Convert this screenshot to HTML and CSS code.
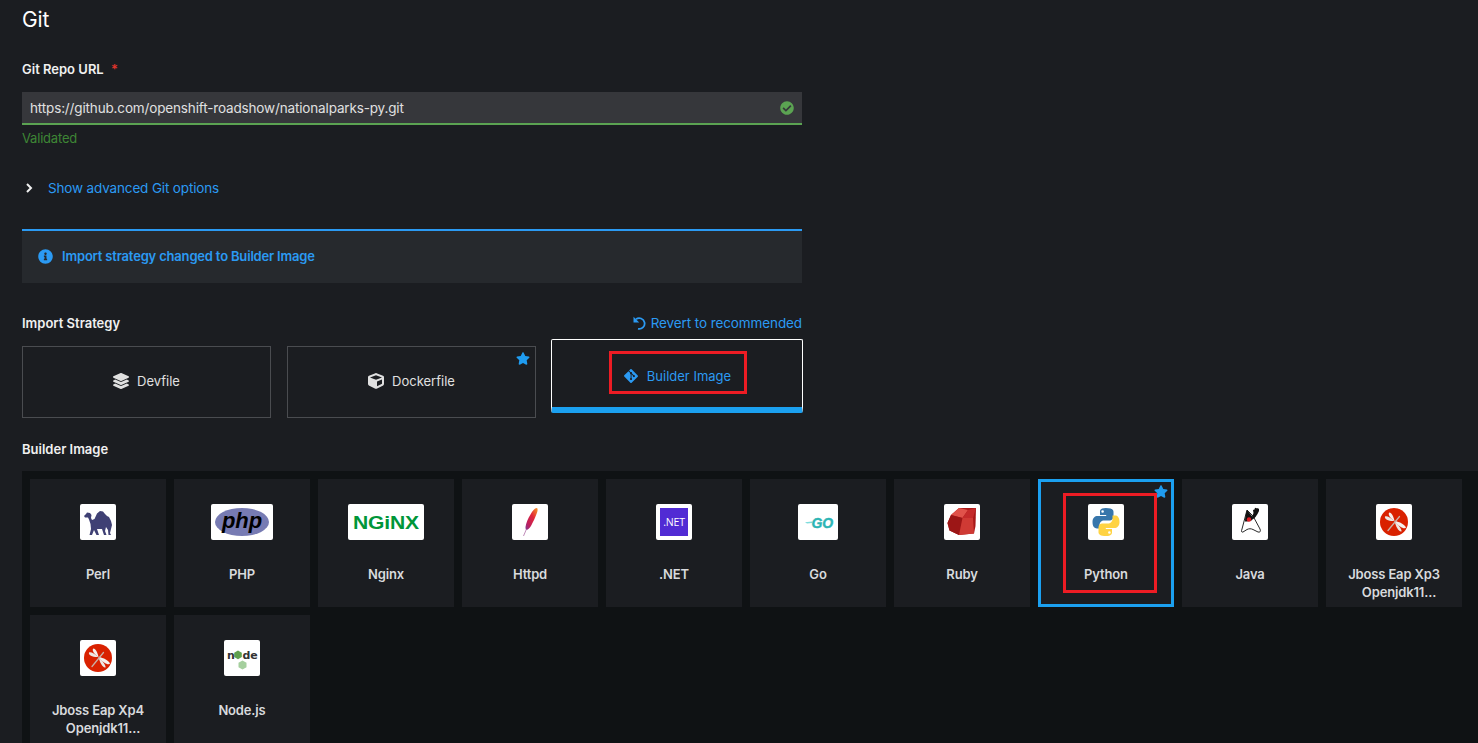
FILE: index.html
```html
<!DOCTYPE html>
<html lang="en">
<head>
    <meta charset="UTF-8">
    <meta name="viewport" content="width=device-width, initial-scale=1.0">
    <title>Import from Git</title>
    <link rel="stylesheet" href="styles.css">
</head>
<body>
    <svg class="defs" width="0" height="0">
        <symbol id="star" viewBox="0 0 576 512"><path d="M259.3 17.8L194 150.2 47.9 171.5c-26.2 3.8-36.7 36.1-17.7 54.6l105.7 103-25 145.5c-4.5 26.3 23.2 46 46.4 33.7L288 439.6l130.7 68.7c23.2 12.2 50.9-7.4 46.4-33.7l-25-145.5 105.7-103c19-18.5 8.5-50.8-17.7-54.6L382 150.2 316.7 17.8c-11.7-23.6-45.6-23.9-57.4 0z"/></symbol>
        <symbol id="dragonfly" viewBox="0 0 36 36">
            <circle cx="18" cy="18" r="14" fill="#d92100"/>
            <path d="M18.500 17C17.500 12.500 15.500 8.500 13.500 8.500 11.500 9.500 13.500 14 18.500 17z" fill="#f5f1ee"/>
            <path d="M18.500 17C14 13 10.500 11.500 9 12.500 8 15 13 17.500 18.500 17z" fill="#ece7e3"/>
            <path d="M18.500 17C23.500 17.500 29 21 30 23.500 29 26 22.500 22.500 18.500 17z" fill="#f5f1ee"/>
            <path d="M18.500 17C22 20 26 25.500 25.500 27.500 23 28.500 19.500 22 18.500 17z" fill="#ece7e3"/>
            <path d="M23.500 12.500L12 26.500" stroke="#c9b0a6" stroke-width="1.300" stroke-linecap="round"/>
        </symbol>
    </svg>

    <div class="page">
        <h1 class="title">Git</h1>

        <div class="form-col">
            <label class="field-label">Git Repo URL <span class="req">*</span></label>
            <div class="url-input">
                <span>https://github.com/openshift-roadshow/nationalparks-py.git</span>
                <svg class="ok-icon" viewBox="0 0 512 512"><path d="M504 256c0 136.967-111.033 248-248 248S8 392.967 8 256 119.033 8 256 8s248 111.033 248 248zM227.314 387.314l184-184c6.248-6.248 6.248-16.379 0-22.627l-22.627-22.627c-6.248-6.249-16.379-6.25-22.628 0L216 308.118l-70.059-70.059c-6.248-6.248-16.379-6.248-22.628 0l-22.627 22.627c-6.248 6.248-6.248 16.379 0 22.627l104 104c6.249 6.249 16.379 6.249 22.628.001z"/></svg>
            </div>
            <div class="helper">Validated</div>

            <div class="advanced">
                <svg class="chevron" viewBox="0 0 10 12"><path d="M3 2l4 4-4 4" fill="none" stroke="#f0f0f0" stroke-width="2"/></svg>
                <a class="link">Show advanced Git options</a>
            </div>

            <div class="alert">
                <svg class="info-icon" viewBox="0 0 512 512"><path d="M256 8C119.043 8 8 119.083 8 256c0 136.997 111.043 248 248 248s248-111.003 248-248C504 119.083 392.957 8 256 8zm0 110c23.196 0 42 18.804 42 42s-18.804 42-42 42-42-18.804-42-42 18.804-42 42-42zm56 254c0 6.627-5.373 12-12 12h-88c-6.627 0-12-5.373-12-12v-24c0-6.627 5.373-12 12-12h12v-64h-12c-6.627 0-12-5.373-12-12v-24c0-6.627 5.373-12 12-12h64c6.627 0 12 5.373 12 12v100h12c6.627 0 12 5.373 12 12v24z"/></svg>
                <span>Import strategy changed to Builder Image</span>
            </div>

            <div class="strategy-head">
                <span class="field-label">Import Strategy</span>
                <a class="link revert">
                    <svg class="revert-icon" viewBox="0 0 14 14"><path d="M3 3.200A5.400 5.400 0 1 1 5 12.800" fill="none" stroke="currentColor" stroke-width="1.800"/><path d="M.5 .8v5.700h5.700z" fill="currentColor"/></svg>
                    Revert to recommended
                </a>
            </div>

            <div class="strategies">
                <div class="strategy">
                    <svg class="strategy-icon" viewBox="0 0 512 512"><path d="M12.41 148.02l232.94 105.67c6.8 3.09 14.49 3.09 21.29 0l232.94-105.67c16.55-7.51 16.55-32.52 0-40.03L266.65 2.31a25.607 25.607 0 0 0-21.29 0L12.41 107.98c-16.55 7.51-16.55 32.53 0 40.04zm487.18 88.28l-58.09-26.33-161.64 73.27c-7.56 3.43-15.59 5.17-23.86 5.17s-16.29-1.74-23.86-5.17L70.51 209.97l-58.1 26.33c-16.55 7.5-16.55 32.5 0 40l232.94 105.59c6.8 3.08 14.49 3.08 21.29 0L499.59 276.3c16.55-7.5 16.55-32.5 0-40zm0 127.8l-57.87-26.23-161.86 73.37c-7.56 3.43-15.59 5.17-23.86 5.17s-16.29-1.74-23.86-5.17L70.29 337.87l-57.88 26.23c-16.55 7.5-16.55 32.5 0 40l232.94 105.59c6.8 3.08 14.49 3.08 21.29 0L499.59 404.1c16.55-7.5 16.55-32.5 0-40z"/></svg>
                    Devfile
                </div>
                <div class="strategy">
                    <svg class="star-corner"><use href="#star"/></svg>
                    <svg class="strategy-icon" viewBox="0 0 512 512"><path d="M239.1 6.3l-208 78c-18.7 7-31.1 25-31.1 45v225.1c0 18.2 10.3 34.8 26.5 42.9l208 104c13.5 6.8 29.4 6.8 42.9 0l208-104c16.3-8.1 26.5-24.8 26.5-42.9V129.3c0-20-12.4-37.9-31.1-44.9l-208-78C262 2.2 250 2.2 239.1 6.3zM256 68.4l192 72v1.1l-192 78-192-78v-1.1l192-72zm32 356V275.5l160-65v133.9l-160 80z"/></svg>
                    Dockerfile
                </div>
                <div class="strategy selected">
                    <svg class="strategy-icon" viewBox="0 0 448 512"><path d="M439.55 236.05L244 40.45a28.87 28.87 0 0 0-40.81 0l-40.66 40.63 51.52 51.52c27.06-9.14 52.68 16.77 43.39 43.68l49.66 49.66c34.23-11.8 61.18 31 35.47 56.69-26.49 26.49-70.21-2.87-56-37.34L240.22 199v121.85c25.3 12.54 22.26 41.85 9.08 55a34.34 34.34 0 0 1-48.55 0c-17.57-17.6-11.07-46.91 11.25-56v-123c-20.8-8.51-24.6-30.74-18.64-45L142.57 101 8.45 235.14a28.86 28.86 0 0 0 0 40.81l195.61 195.6a28.86 28.86 0 0 0 40.8 0l194.69-194.69a28.86 28.86 0 0 0 0-40.81z"/></svg>
                    Builder Image
                    <div class="red-box builder-mark"></div>
                </div>
            </div>

            <div class="field-label builder-label">Builder Image</div>
        </div>

        <div class="catalog">
            <div class="card">
                <div class="logo">
                    <svg viewBox="0 0 36 36"><path d="M4 12L6 10 7 8.500 10 9 11.500 11 11 14 12 16 14.500 15 17 9.500 20 7 23 7.500 25 10 27 12 29 13 31 17 32 21 31 25 30 29 31 31 28.500 31 28 26 26 23 25 27 26.500 31 24 31 22 25 17 25 19 31 16.500 31 14 26 12 31 9.500 31 11 25 10.500 20 9 15.500 8 13.500 5 13.500z" fill="#3f4074"/></svg>
                </div>
                <div class="card-name">Perl</div>
            </div>
            <div class="card">
                <div class="logo logo-php">
                    <svg viewBox="0 0 62 36"><ellipse cx="31" cy="18" rx="27" ry="14" fill="#777bb3"/><text x="31" y="24" class="php-text">php</text></svg>
                </div>
                <div class="card-name">PHP</div>
            </div>
            <div class="card">
                <div class="logo logo-nginx">
                    <svg viewBox="0 0 76 36"><text x="5" y="25" class="nginx-text" textLength="66" lengthAdjust="spacingAndGlyphs">NGiNX</text></svg>
                </div>
                <div class="card-name">Nginx</div>
            </div>
            <div class="card">
                <div class="logo">
                    <svg viewBox="0 0 36 36">
                        <defs><linearGradient id="feather" x1="1" y1="0" x2="0" y2="1"><stop offset="0" stop-color="#f69923"/><stop offset=".4" stop-color="#e0263a"/><stop offset=".75" stop-color="#be1f5d"/><stop offset="1" stop-color="#7c3a94"/></linearGradient></defs>
                        <path d="M25 4c1 1 .8 3-.5 6-1.500 4-3.500 8-5 11-1.500 3-3.500 4.500-5 5-.8-.5-1-1.500-1-3 .5-4 2.500-8.500 5-12.500 2-3.500 4-6.500 6.500-6.500z" fill="url(#feather)"/>
                        <path d="M14.500 25L11.500 32" stroke="#b06fa8" stroke-width=".8"/>
                    </svg>
                </div>
                <div class="card-name">Httpd</div>
            </div>
            <div class="card">
                <div class="logo">
                    <svg viewBox="0 0 36 36"><rect x="4" y="4" width="28" height="28" fill="#512bd4"/><text x="18" y="22" class="net-text">.NET</text></svg>
                </div>
                <div class="card-name">.NET</div>
            </div>
            <div class="card">
                <div class="logo logo-go">
                    <svg viewBox="0 0 40 36"><path d="M7 18.200L14 17.500V19L9 19.500z" fill="#7fdcdc"/><text x="13.500" y="24.300" class="go-text">GO</text></svg>
                </div>
                <div class="card-name">Go</div>
            </div>
            <div class="card">
                <div class="logo">
                    <svg viewBox="0 0 36 36"><path d="M15 4L32 4 31.500 22 30 29.500 15 31 5.500 26.500 3.500 19 7 11z" fill="#a81818"/><path d="M15 4L24 6 18.500 14 7 11z" fill="#e0524a"/><path d="M24 6L32 4 29 14 18.500 14z" fill="#c42a2a"/><path d="M7 11L18.500 14 15 31 5.500 26.500 3.500 19z" fill="#9c1616"/><path d="M18.500 14L29 14 30 29.500 15 31z" fill="#cf3a34"/></svg>
                </div>
                <div class="card-name">Ruby</div>
            </div>
            <div class="card selected">
                <svg class="star-corner"><use href="#star"/></svg>
                <div class="logo">
                    <svg viewBox="0 0 36 36">
                        <path fill-rule="evenodd" d="M17.800 4C12.800 4 12 6 12 7.800V11h6.200v1H9.500C7 12 4.500 13.700 4.500 18c0 4.500 2 6.400 4.400 6.400h2.600v-3.300c0-2.500 2.100-4.600 4.600-4.600h5.700c2 0 3.700-1.700 3.700-3.700V7.800C25.500 5.700 23.800 4 17.800 4zM14.600 6.200a1.300 1.300 0 1 1 0 2.600 1.300 1.300 0 0 1 0-2.600z" fill="#3776ab"/>
                        <path fill-rule="evenodd" transform="rotate(180 18 18)" d="M17.800 4C12.800 4 12 6 12 7.800V11h6.200v1H9.500C7 12 4.500 13.700 4.500 18c0 4.500 2 6.400 4.400 6.400h2.600v-3.300c0-2.500 2.100-4.600 4.600-4.600h5.700c2 0 3.700-1.700 3.700-3.700V7.800C25.500 5.700 23.800 4 17.800 4zM14.600 6.200a1.300 1.300 0 1 1 0 2.600 1.300 1.300 0 0 1 0-2.600z" fill="#ffd343"/>
                    </svg>
                </div>
                <div class="card-name">Python</div>
                <div class="red-box python-mark"></div>
            </div>
            <div class="card">
                <div class="logo">
                    <svg viewBox="0 0 36 36">
                        <path d="M15 6L10 25c-1 2.500-.5 3.500 1 3l4-2.500c2-1 4-1 6 0l5 2.500c2 .5 3-.5 2-3l-7-13z" fill="#fff" stroke="#111" stroke-width=".9"/>
                        <path d="M15 6l6.500 8c-1 2.500-3 3.500-8.500 3.500C13 13 14 9 15 6z" fill="#111"/>
                        <circle cx="17" cy="15.500" r="2.200" fill="#e01b24"/>
                        <path d="M20 13l1.500-4-.5-3 1.500-.5 .5-1.800 1.500 .5 1.500 0 1 .8 0 2-1.500 3-2 3-2 2z" fill="#111"/>
                    </svg>
                </div>
                <div class="card-name">Java</div>
            </div>
            <div class="card">
                <div class="logo"><svg viewBox="0 0 36 36"><use href="#dragonfly"/></svg></div>
                <div class="card-name">Jboss Eap Xp3 <span class="name-more">Openjdk11...</span></div>
            </div>
            <div class="card">
                <div class="logo"><svg viewBox="0 0 36 36"><use href="#dragonfly"/></svg></div>
                <div class="card-name">Jboss Eap Xp4 <span class="name-more">Openjdk11...</span></div>
            </div>
            <div class="card">
                <div class="logo">
                    <svg viewBox="0 0 36 36">
                        <path d="M14 10.500l3.800 2.200v4.400L14 19.300l-3.800-2.200v-4.400z" fill="#5fa04e"/>
                        <text x="3" y="19" class="node-text">n</text>
                        <text x="18.500" y="19" class="node-text">de</text>
                        <path d="M18.500 20.500l4 2.300v4.400l-4 2.300-4-2.300v-4.400z" fill="#a5cf9e"/>
                    </svg>
                </div>
                <div class="card-name">Node.js</div>
            </div>
        </div>
    </div>
</body>
</html>
```

FILE: styles.css
```css
html, body {
    height: 100%;
    margin: 0;
    overflow: hidden;
}
body {
    font-family: Inter, "Noto Sans", sans-serif;
    font-size: 13.5px;
    line-height: 20px;
    letter-spacing: -0.15px;
    background-color: #1b1d21;
    color: #e0e0e0;
}
.defs {
    display: block;
    height: 0;
}
.page {
    display: flex;
    flex-direction: column;
    box-sizing: border-box;
    height: 100vh;
    padding-top: 7px;
}
.title {
    margin: 0 0 0 22px;
    font-size: 21px;
    line-height: 26px;
    font-weight: 400;
    color: #fff;
}
.form-col {
    width: 780px;
    margin-left: 22px;
}
.field-label {
    display: block;
    font-weight: 600;
    font-size: 13px;
    letter-spacing: 0;
    color: #f0f0f0;
}
.form-col > label.field-label {
    margin-top: 26px;
}
.req {
    margin-left: 4px;
    color: #e0342b;
}
.url-input {
    display: flex;
    align-items: center;
    justify-content: space-between;
    box-sizing: border-box;
    height: 33px;
    margin-top: 13px;
    padding: 1px 8px 0;
    background: #36373b;
    border-bottom: 2px solid #5ba352;
}
.ok-icon {
    width: 14px;
    height: 14px;
    fill: #5ba352;
}
.helper {
    margin-top: 3px;
    font-size: 13px;
    letter-spacing: -0.2px;
    color: #3e8635;
}
.advanced {
    display: flex;
    align-items: center;
    margin-top: 30px;
}
.chevron {
    width: 10px;
    height: 12px;
    margin: 0 14px 0 2px;
}
.link {
    color: #2b9af3;
}
.alert {
    display: flex;
    align-items: center;
    box-sizing: border-box;
    height: 54px;
    margin-top: 31px;
    padding: 0 0 2px 16px;
    background: #26292d;
    border-top: 2px solid #2b9af3;
    color: #2b9af3;
    font-size: 13px;
    font-weight: 600;
    letter-spacing: -0.18px;
}
.info-icon {
    width: 15px;
    height: 15px;
    margin-right: 9px;
    fill: #2b9af3;
}
.strategy-head {
    display: flex;
    align-items: center;
    justify-content: space-between;
    margin-top: 30px;
}
.revert {
    display: flex;
    align-items: center;
    gap: 4px;
    font-size: 13.5px;
    letter-spacing: -0.1px;
}
.revert-icon {
    width: 14px;
    height: 14px;
    margin-right: 0;
}
.strategies {
    display: grid;
    grid-template-columns: 249px 249px 251px;
    column-gap: 16px;
    margin-top: 6px;
    height: 78px;
}
.strategy {
    position: relative;
    box-sizing: border-box;
    display: flex;
    align-items: center;
    justify-content: center;
    gap: 8px;
    height: 72px;
    margin-top: 7px;
    padding-bottom: 2px;
    border: 1px solid #4a4c50;
    font-size: 13px;
    letter-spacing: 0;
}
.strategy.selected {
    height: 74px;
    margin: 0 0 0 -1px;
    padding: 5px 0 0;
    border: 0;
    border-top: 1px solid #fff;
    border-left: 1px solid #fff;
    border-right: 1px solid #fff;
    border-bottom: 6px solid #1ba0f0;
    border-radius: 2px;
    color: #2b9af3;
}
.strategy-icon {
    width: 16px;
    height: 16px;
    fill: currentColor;
}
.star-corner {
    position: absolute;
    top: 5px;
    right: 5px;
    width: 14px;
    height: 13px;
    fill: #1f9cf0;
}
.red-box {
    position: absolute;
    box-sizing: border-box;
    border: 3px solid #ed1c24;
}
.builder-mark {
    left: 57px;
    top: 11px;
    width: 138px;
    height: 43px;
}
.builder-label {
    margin-top: 22px;
}
.catalog {
    flex: 1;
    min-height: 0;
    overflow: hidden;
    display: grid;
    grid-template-columns: repeat(auto-fill, 136px);
    gap: 8px;
    margin: 12px 0 0 22px;
    padding: 8px;
    align-content: start;
    background: #0f1214;
}
.card {
    position: relative;
    box-sizing: border-box;
    height: 128px;
    padding: 25px 16px 0;
    background: #1b1d21;
    text-align: center;
}
.card.selected {
    border: 3px solid #1ba0f0;
    padding: 22px 13px 0;
}
.card.selected .star-corner {
    top: 3px;
    right: 3px;
}
.logo {
    display: block;
    width: 36px;
    height: 36px;
    margin: 0 auto;
    background: #fff;
    border-radius: 2px;
}
.logo svg {
    display: block;
    width: 100%;
    height: 100%;
}
.logo-php {
    width: 62px;
}
.logo-nginx {
    width: 76px;
}
.logo-go {
    width: 40px;
}
.card-name {
    margin-top: 25px;
    font-size: 13px;
    line-height: 18px;
    font-weight: 600;
    letter-spacing: -0.15px;
    color: #d8dadd;
}
.name-more {
    display: block;
    padding-left: 10px;
}
.python-mark {
    left: 22px;
    top: 11px;
    width: 94px;
    height: 100px;
}
.php-text {
    font: italic 700 22px "Liberation Sans", sans-serif;
    text-anchor: middle;
    fill: #000;
}
.nginx-text {
    font: 700 19px "Liberation Sans", sans-serif;
    fill: #009639;
}
.net-text {
    font: 400 10.5px "Open Sans", sans-serif;
    text-anchor: middle;
    fill: #fff;
}
.go-text {
    font: italic 700 14px "Liberation Sans", sans-serif;
    fill: #2db5b5;
    stroke: #2db5b5;
    stroke-width: 0.4px;
}
.node-text {
    font: 700 11px "DejaVu Sans", sans-serif;
    fill: #333;
}
```
